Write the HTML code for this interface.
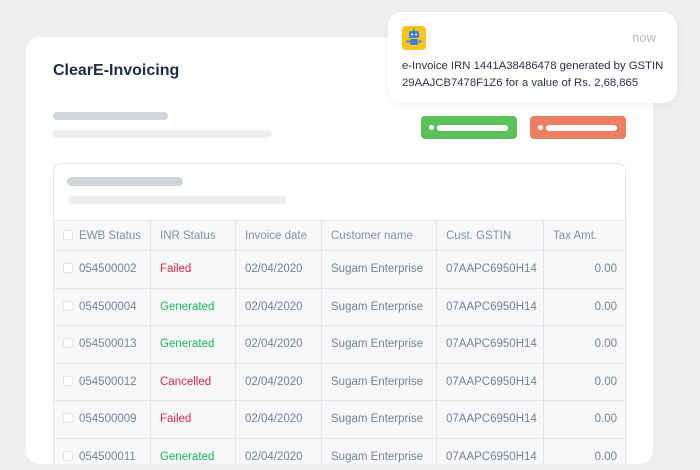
<!DOCTYPE html>
<html><head><style>
*{margin:0;padding:0;box-sizing:border-box}
html,body{width:700px;height:470px;overflow:hidden}
body{background:#efefef;position:relative;font-family:"Liberation Sans",sans-serif}
.card{position:absolute;left:26px;top:37px;width:627px;height:427px;background:#fff;border-radius:14px}
.abs{position:absolute}
.sk{position:absolute;border-radius:5px}
.title{position:absolute;left:53px;top:62px;font-size:16px;font-weight:bold;color:#1f2d44}
.tbl{position:absolute;left:53px;top:163px;width:573px;height:310px;border:1px solid #e3e6ea;border-radius:8px;background:#fff;overflow:hidden}
table{position:absolute;left:-1px;top:56px;width:573px;table-layout:fixed;border-collapse:collapse;font-size:11.5px;color:#7b8089}
td{border:1px solid #e3e6ea;height:37.5px;padding:0 9px;white-space:nowrap;overflow:hidden;background:#f7f8fa}
tr.h td{height:30px;color:#8a8f97}
.cb{display:inline-block;width:10px;height:10px;border:1px solid #e4e6ea;border-radius:2px;background:#fff;margin-right:6px;vertical-align:-1px}
.f{color:#e0254a}.g{color:#19b55a}
.r{text-align:right}
.notif{position:absolute;left:388px;top:12px;width:289px;height:91px;background:#fff;border-radius:14px;box-shadow:0 2px 10px rgba(0,0,0,.06)}
.btn{position:absolute;top:116px;height:23px;width:96px;border-radius:4px}
.btn i{position:absolute;left:8px;top:9px;width:5px;height:5px;border-radius:50%;background:#fff}
.btn b{position:absolute;left:16px;top:8.5px;width:71px;height:6px;border-radius:3px;background:#fff}
</style></head><body>
<div class="card"></div>
<div class="title">ClearE-Invoicing</div>
<div class="sk" style="left:53px;top:112px;width:115px;height:8px;background:#d3d6d9"></div>
<div class="sk" style="left:53px;top:130px;width:219px;height:8px;background:#eceef0"></div>
<div class="btn" style="left:421px;background:#5bc25a"><i></i><b></b></div>
<div class="btn" style="left:530px;background:#ec7f64"><i></i><b></b></div>
<div class="tbl">
<div class="sk" style="left:13px;top:13px;width:116px;height:9px;background:#d3d6d9"></div>
<div class="sk" style="left:13px;top:32px;width:220px;height:8px;background:#eceef0"></div>
<table>
<colgroup><col style="width:97px"><col style="width:85px"><col style="width:86px"><col style="width:115px"><col style="width:107px"><col style="width:83px"></colgroup>
<tr class="h"><td><span class="cb"></span>EWB Status</td><td>INR Status</td><td>Invoice date</td><td>Customer name</td><td>Cust. GSTIN</td><td>Tax Amt.</td></tr>
<tr><td><span class="cb"></span>054500002</td><td class="f">Failed</td><td>02/04/2020</td><td>Sugam Enterprise</td><td>07AAPC6950H14</td><td class="r">0.00</td></tr>
<tr><td><span class="cb"></span>054500004</td><td class="g">Generated</td><td>02/04/2020</td><td>Sugam Enterprise</td><td>07AAPC6950H14</td><td class="r">0.00</td></tr>
<tr><td><span class="cb"></span>054500013</td><td class="g">Generated</td><td>02/04/2020</td><td>Sugam Enterprise</td><td>07AAPC6950H14</td><td class="r">0.00</td></tr>
<tr><td><span class="cb"></span>054500012</td><td class="f">Cancelled</td><td>02/04/2020</td><td>Sugam Enterprise</td><td>07AAPC6950H14</td><td class="r">0.00</td></tr>
<tr><td><span class="cb"></span>054500009</td><td class="f">Failed</td><td>02/04/2020</td><td>Sugam Enterprise</td><td>07AAPC6950H14</td><td class="r">0.00</td></tr>
<tr><td><span class="cb"></span>054500011</td><td class="g">Generated</td><td>02/04/2020</td><td>Sugam Enterprise</td><td>07AAPC6950H14</td><td class="r">0.00</td></tr>
</table>
</div>
<div class="abs" style="left:0;top:464px;width:700px;height:6px;background:#efefef"></div>
<div class="notif">
<svg class="abs" style="left:14px;top:14px" width="24" height="24" viewBox="0 0 24 24">
<rect width="24" height="24" rx="4" fill="#f8c51c"/>
<rect x="7" y="5" width="10" height="7" rx="2" fill="#3f7de0"/>
<circle cx="10" cy="8.5" r="1" fill="#fff"/><circle cx="14" cy="8.5" r="1" fill="#fff"/>
<rect x="11" y="2.5" width="2" height="2.5" fill="#2cb34a"/>
<rect x="8" y="13" width="8" height="6" rx="1.5" fill="#3f7de0"/>
<rect x="4.5" y="14.5" width="3" height="2" fill="#3f7de0"/><rect x="16.5" y="14.5" width="3" height="2" fill="#3f7de0"/>
</svg>
<div class="abs" style="right:21px;top:18px;font-size:13px;color:#b8bcc2">now</div>
<div class="abs" style="left:14px;top:46px;font-size:11.3px;line-height:16.5px;color:#2b3242;white-space:nowrap">e-Invoice IRN 1441A38486478 generated by GSTIN<br>29AAJCB7478F1Z6 for a value of Rs. 2,68,865</div>
</div>
</body></html>
